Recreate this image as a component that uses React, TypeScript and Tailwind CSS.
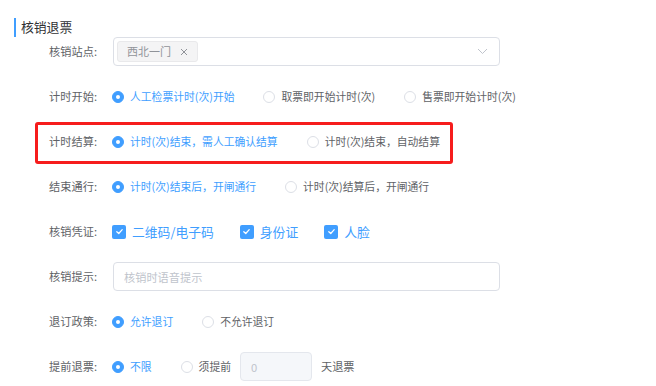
import React from 'react'

const FONT = { fontFamily: '"Noto Sans CJK SC", "Noto Sans", sans-serif' }

const Radio = ({ label, checked }: { label: string, checked?: boolean }) => (
    <label className='flex items-center gap-[6px] cursor-pointer'>
        {checked ? (
            <span className='w-[12px] h-[12px] rounded-full bg-[#409eff] border border-[#409eff] flex items-center justify-center'>
                <span className='w-[4px] h-[4px] rounded-full bg-white' />
            </span>
        ) : (
            <span className='w-[12px] h-[12px] rounded-full bg-white border border-[#dcdfe6]' />
        )}
        <span className={`text-[10.8px] ${checked ? 'text-[#409eff]' : 'text-[#606266]'}`}>{label}</span>
    </label>
)

const Check = ({ label }: { label: string }) => (
    <label className='flex items-center gap-[6px] cursor-pointer'>
        <span className='w-[14px] h-[14px] rounded-[2px] bg-[#409eff] flex items-center justify-center'>
            <svg width="9" height="9" viewBox="0 0 10 10" fill="none">
                <path d="M2 5.2 L4.2 7.2 L8 3" stroke="white" strokeWidth="1.4" strokeLinecap="round" strokeLinejoin="round" />
            </svg>
        </span>
        <span className='text-[12.8px] text-[#409eff]'>{label}</span>
    </label>
)

const Row = ({ label, children, className = '' }: { label: string, children: React.ReactNode, className?: string }) => (
    <div className={`relative flex items-center h-[29px] ${className}`}>
        <div className='w-[112px] shrink-0 text-right pr-[15px] text-[11.2px] text-[#606266]'>{label}:</div>
        <div className='flex items-center'>{children}</div>
    </div>
)

export default function App() {
    return (
        <div className='w-[656px] h-[386px] bg-white overflow-hidden' style={FONT}>
            <div className='mt-[18px] ml-[14px] h-[19px] border-l-2 border-[#409eff] pl-[5px] flex items-center text-[12.8px] text-[#303133] leading-none'>
                核销退票
            </div>
            <div className='flex flex-col gap-[16px]'>
                <Row label='核销站点'>
                    <div className='ml-[1px] w-[387px] h-[29px] border border-[#dcdfe6] rounded-[4px] flex items-center justify-between pl-[3px] pr-[11px]'>
                        <span className='h-[21px] px-[9px] flex items-center gap-[9px] bg-[#f4f4f5] border border-[#e9e9eb] rounded-[3px] text-[11px] text-[#909399]'>
                            西北一门
                            <svg width="8" height="8" viewBox="0 0 8 8">
                                <path d="M1 1 L7 7 M7 1 L1 7" stroke="#909399" strokeWidth="1" />
                            </svg>
                        </span>
                        <svg width="11" height="7" viewBox="0 0 11 7" fill="none">
                            <path d="M1 1 L5.5 5.5 L10 1" stroke="#c0c4cc" strokeWidth="1" />
                        </svg>
                    </div>
                </Row>
                <Row label='计时开始'>
                    <div className='flex items-center gap-[29px]'>
                        <Radio label='人工检票计时(次)开始' checked />
                        <Radio label='取票即开始计时(次)' />
                        <Radio label='售票即开始计时(次)' />
                    </div>
                </Row>
                <Row label='计时结算'>
                    <div className='flex items-center gap-[29px]'>
                        <Radio label='计时(次)结束，需人工确认结算' checked />
                        <Radio label='计时(次)结束，自动结算' />
                    </div>
                    <div className='absolute left-[35px] top-[-5px] w-[418px] h-[42px] border-[3px] border-[#f61c1c] rounded-[3px] pointer-events-none' />
                </Row>
                <Row label='结束通行'>
                    <div className='flex items-center gap-[29px]'>
                        <Radio label='计时(次)结束后，开闸通行' checked />
                        <Radio label='计时(次)结算后，开闸通行' />
                    </div>
                </Row>
                <Row label='核销凭证'>
                    <div className='flex items-center gap-[26px]'>
                        <Check label='二维码/电子码' />
                        <Check label='身份证' />
                        <Check label='人脸' />
                    </div>
                </Row>
                <Row label='核销提示'>
                    <input
                        className='ml-[1px] w-[387px] h-[29px] border border-[#dcdfe6] rounded-[4px] px-[10px] text-[11.2px] text-[#606266] placeholder:text-[#c0c4cc] outline-none'
                        placeholder='核销时语音提示'
                    />
                </Row>
                <Row label='退订政策'>
                    <div className='flex items-center gap-[29px]'>
                        <Radio label='允许退订' checked />
                        <Radio label='不允许退订' />
                    </div>
                </Row>
                <Row label='提前退票'>
                    <div className='flex items-center gap-[29px]'>
                        <Radio label='不限' checked />
                        <div className='flex items-center gap-[9px]'>
                            <Radio label='须提前' />
                            <input
                                disabled
                                value='0'
                                className='w-[72px] h-[29px] bg-[#f5f7fa] border border-[#e4e7ed] rounded-[4px] px-[10px] text-[11.2px] text-[#c0c4cc] outline-none'
                            />
                            <span className='text-[11.2px] text-[#606266]'>天退票</span>
                        </div>
                    </div>
                </Row>
            </div>
        </div>
    )
}
